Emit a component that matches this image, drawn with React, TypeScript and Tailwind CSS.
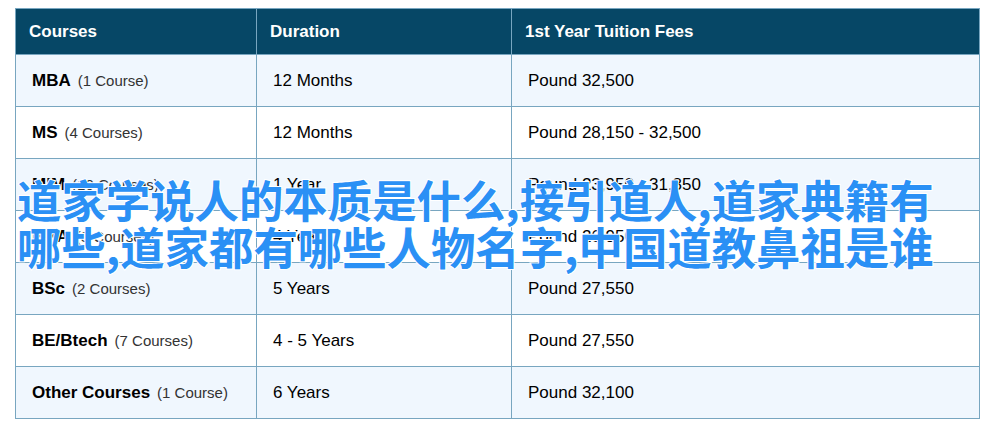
import React from 'react';

interface Row {
  course: string;
  count: string;
  duration: string;
  fees: string;
}

const ROWS: Row[] = [
  { course: 'MBA', count: '(1 Course)', duration: '12 Months', fees: 'Pound 32,500' },
  { course: 'MS', count: '(4 Courses)', duration: '12 Months', fees: 'Pound 28,150 - 32,500' },
  { course: 'MIM', count: '(10 Courses)', duration: '1 Year', fees: 'Pound 23,950 - 31,350' },
  { course: 'BBA', count: '(3 Courses)', duration: '4 Years', fees: 'Pound 26,950' },
  { course: 'BSc', count: '(2 Courses)', duration: '5 Years', fees: 'Pound 27,550' },
  { course: 'BE/Btech', count: '(7 Courses)', duration: '4 - 5 Years', fees: 'Pound 27,550' },
  { course: 'Other Courses', count: '(1 Course)', duration: '6 Years', fees: 'Pound 32,100' },
];

export default function App() {
  return (
    <div className="relative w-[1000px] h-[436px] bg-white font-['Liberation_Sans',Arial,sans-serif] text-black">
      <div className="pt-[8px] pl-[15px]">
        <table className="w-[965px] border-collapse table-fixed">
          <colgroup>
            <col className="w-[241px]" />
            <col className="w-[255px]" />
            <col />
          </colgroup>
          <thead>
            <tr className="h-[46px] bg-[#064766] text-white text-[17px] font-bold">
              <th className="border border-[#78a6c0] pl-[13px] text-left">Courses</th>
              <th className="border border-[#78a6c0] pl-[13px] text-left">Duration</th>
              <th className="border border-[#78a6c0] pl-[13px] text-left">1st Year Tuition Fees</th>
            </tr>
          </thead>
          <tbody>
            {ROWS.map((r, i) => (
              <tr key={r.course} className={i % 2 === 0 ? 'h-[52px] bg-[#f0f7fe]' : 'h-[52px] bg-white'}>
                <td className="border border-[#78a6c0] pl-[16px] text-[17px]">
                  <span className="font-bold">{r.course}</span>
                  <span className="ml-[7px] text-[15px] text-[#333]">{r.count}</span>
                </td>
                <td className="border border-[#78a6c0] pl-[16px] text-[17px]">{r.duration}</td>
                <td className="border border-[#78a6c0] pl-[16px] text-[17px]">{r.fees}</td>
              </tr>
            ))}
          </tbody>
        </table>
      </div>

      {/* watermark title laid over the table */}
      <div className="absolute left-[17px] top-[175px] w-[965px] font-['Noto_Sans_CJK_SC',sans-serif] font-bold text-[44.4px] leading-[47px] text-[#2a90f5] [-webkit-text-stroke:2px_white] [paint-order:stroke_fill] whitespace-nowrap">
        <div>道家学说人的本质是什么,接引道人,道家典籍有</div>
        <div>哪些,道家都有哪些人物名字,中国道教鼻祖是谁</div>
      </div>
    </div>
  );
}
